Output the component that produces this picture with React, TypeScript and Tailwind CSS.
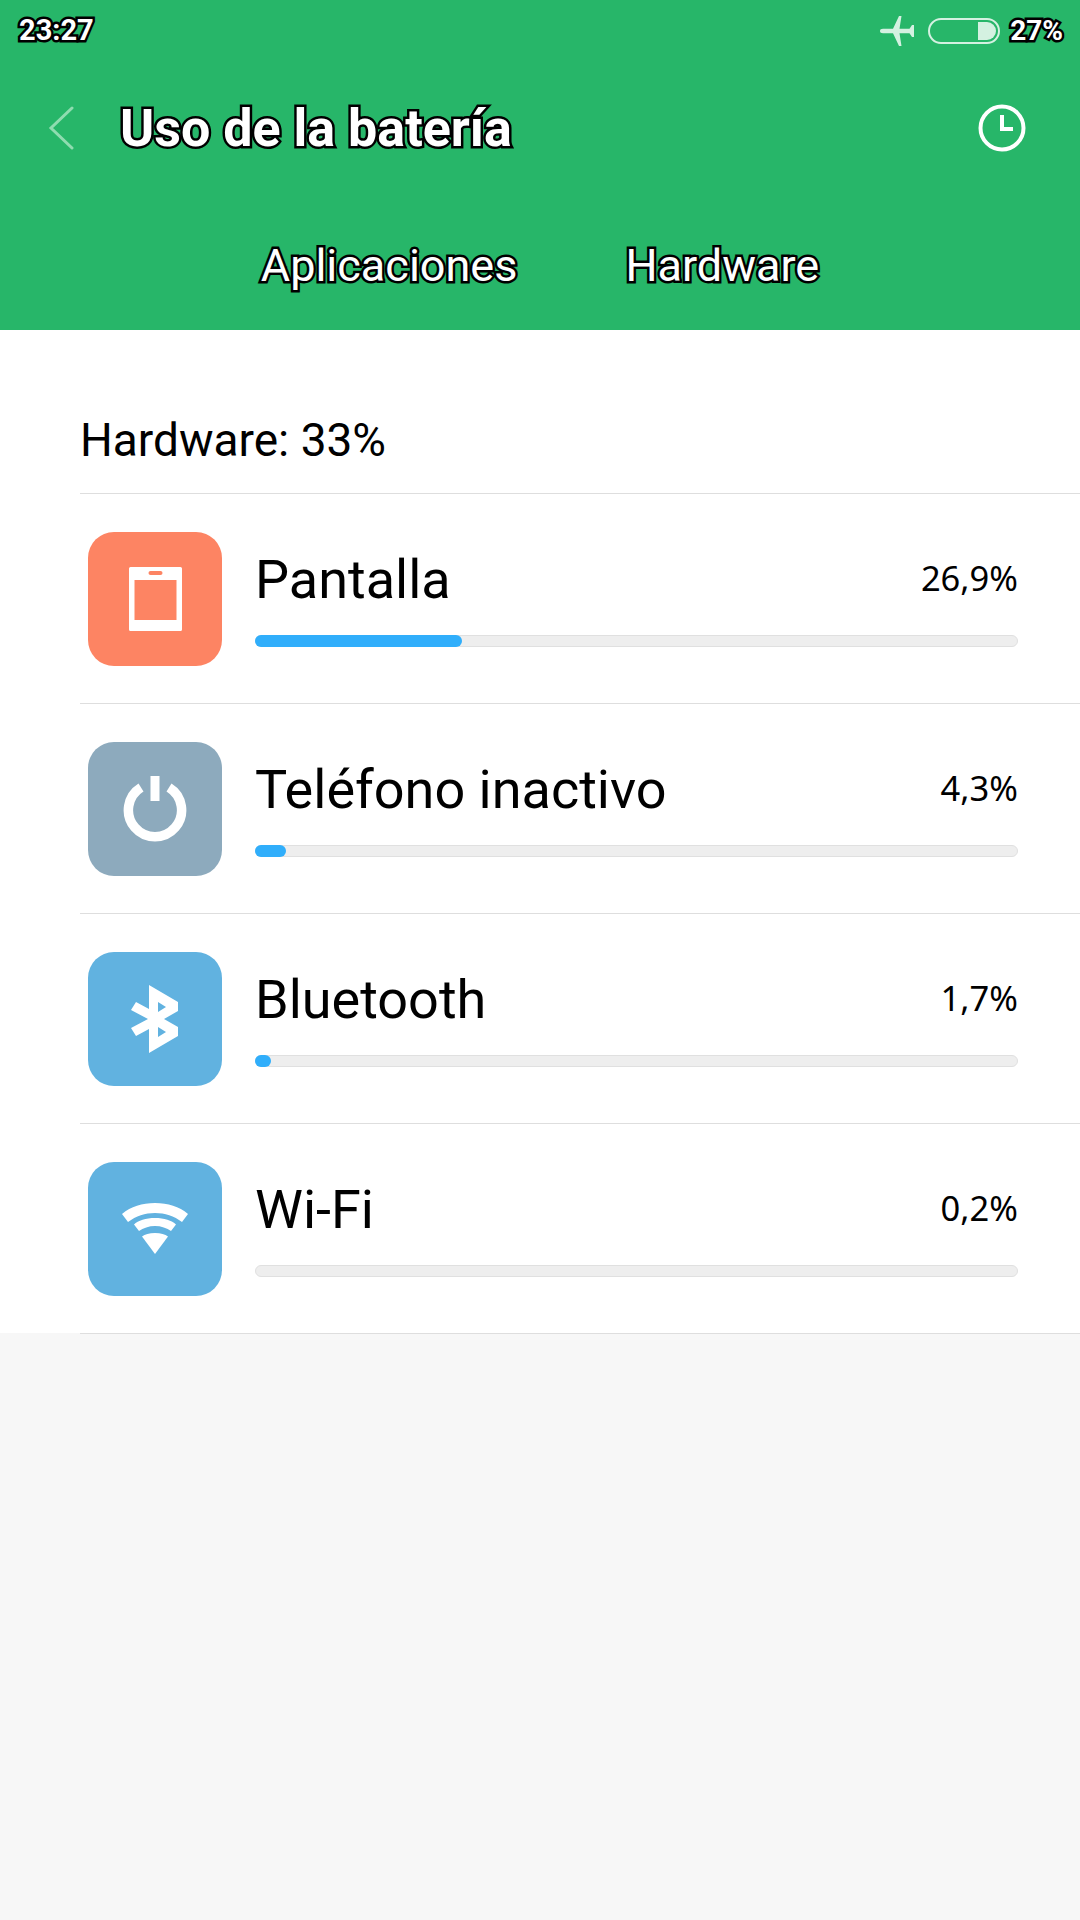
import type { ReactNode } from "react";

const outlined = "[-webkit-text-stroke:5px_#000] [paint-order:stroke_fill] text-white";

const filas = [
  {
    name: "Pantalla",
    pct: "26,9%",
    fill: 207,
    color: "bg-[#fd8463]",
    icon: (
      <svg width="53" height="64" viewBox="0 0 53 64">
        <path fillRule="evenodd" fill="#fff" d="M1.500 0h50a1.500 1.500 0 0 1 1.500 1.500v61a1.500 1.500 0 0 1-1.500 1.500h-50A1.500 1.500 0 0 1 0 62.500v-61A1.500 1.500 0 0 1 1.500 0zM5.500 13v40h42V13z" />
        <rect x="19.500" y="4" width="14" height="4" rx="2" fill="#fd8463" />
      </svg>
    ),
  },
  {
    name: "Teléfono inactivo",
    pct: "4,3%",
    fill: 31,
    color: "bg-[#8daabd]",
    icon: (
      <svg width="64" height="66" viewBox="0 0 64 66">
        <path d="M18 11.500a26.600 26.600 0 1 0 28 0" fill="none" stroke="#fff" strokeWidth="9.500" />
        <rect x="27.500" y="0" width="9" height="25" fill="#fff" />
      </svg>
    ),
  },
  {
    name: "Bluetooth",
    pct: "1,7%",
    fill: 16,
    color: "bg-[#61b2e0]",
    icon: (
      <svg width="50" height="68" viewBox="0 0 50 68">
        <path fill="#fff" fillRule="evenodd" d="M19 0l29 17v9l-14 8 14 8v9L19 68V44L6 51 1 43l17-9L1 25l5-8 13 7zM28 17v10l8-5zM28 42v10l8-5z" />
      </svg>
    ),
  },
  {
    name: "Wi-Fi",
    pct: "0,2%",
    fill: 0,
    color: "bg-[#61b2e0]",
    icon: (
      <svg width="66" height="52" viewBox="0 0 66 52">
        <path fill="#fff" d="M33 0c13 0 24 3.500 33 11l-6 8C52 13 43 10 33 10S14 13 6 19l-6-8C9 3.500 20 0 33 0z" />
        <path fill="#fff" d="M33 15c9 0 17 2.500 21 6.500l-5 6.500c-4-3-10-5-16-5s-12 2-16 5l-5-6.500C16 17.500 24 15 33 15z" />
        <path fill="#fff" d="M33 30c6 0 10 1.500 13 3.500L33 51 20 33.500C23 31.500 27 30 33 30z" />
      </svg>
    ),
  },
];

function Fila({ name, pct, fill, color, icon }: { name: string; pct: string; fill: number; color: string; icon: ReactNode }) {
  return (
    <div className="h-[210px] flex items-center border-b border-[#dedede] pl-[8px]">
      <div className={`w-[134px] h-[134px] rounded-[26px] flex items-center justify-center ${color}`}>{icon}</div>
      <div className="ml-[33px] mb-[2px] w-[763px]">
        <div className="flex items-center justify-between h-[62px]">
          <span className="text-[54px] text-black leading-none">{name}</span>
          <span className="text-[34.500px] text-black leading-none font-['Noto_Sans',sans-serif] -mt-[2px]">{pct}</span>
        </div>
        <div className="mt-[24px] h-[12px] rounded-full bg-[#eeeeee] border border-[#e0e0e0] relative">
          {fill > 0 && <div className="absolute -left-px -top-px h-[12px] rounded-full bg-[#30aefb]" style={{ width: fill }} />}
        </div>
      </div>
    </div>
  );
}

export default function App() {
  return (
    <div className="w-[1080px] h-[1920px] bg-[#f7f7f7] font-['Roboto',sans-serif] overflow-hidden">
      {/* header */}
      <div className="h-[330px] bg-[#27b669]">
        <div className="flex items-center h-[60px] pt-[1px] pl-[19px] pr-[17px]">
          <span className={`text-[29px] font-bold leading-none ${outlined}`}>23:27</span>
          <svg className="ml-auto" width="34" height="30" viewBox="0 0 34 30">
            <path fill="#d4f1e1" d="M0 15c0-1.500 1-2.200 3-2.200h10L19 0h2.500l-2 12.800h10L32 9h2v12h-2l-2.500-3.800h-10l2 12.800H19l-6-12.800H3c-2 0-3-.7-3-2.200z" />
          </svg>
          <div className="ml-[14px] w-[72px] h-[26px] rounded-full border-2 border-[#d4f1e1] p-[2px] flex justify-end">
            <div className="w-[18px] h-full rounded-r-full bg-[#d4f1e1]" />
          </div>
          <span className={`ml-[10px] text-[28px] font-bold leading-none ${outlined}`}>27%</span>
        </div>
        <div className="flex items-center h-[70px] mt-[33px] pl-[48px] pr-[54px]">
          <svg width="26" height="44" viewBox="0 0 26 44">
            <path d="M24 2L3 22l21 20" fill="none" stroke="#8fdcb0" strokeWidth="3" strokeLinecap="round" />
          </svg>
          <span className={`ml-[46px] mt-[2px] text-[52px] font-bold leading-none ${outlined}`}>Uso de la batería</span>
          <svg className="ml-auto -mt-[1px]" width="48" height="48" viewBox="0 0 48 48">
            <circle cx="24" cy="24" r="21.500" fill="none" stroke="#fff" strokeWidth="4" />
            <path d="M24 11v14h11" fill="none" stroke="#fff" strokeWidth="4" />
          </svg>
        </div>
        <div className="flex justify-center gap-[108px] mt-[80px]">
          <span className={`text-[45px] leading-none ${outlined} [-webkit-text-stroke:4px_#000]`}>Aplicaciones</span>
          <span className={`text-[45px] leading-none ${outlined} [-webkit-text-stroke:4px_#000]`}>Hardware</span>
        </div>
      </div>

      {/* lista */}
      <div className="bg-white h-[1003px] pl-[80px]">
        <div className="h-[164px] flex items-end border-b border-[#dedede] pb-[30px] ">
          <span className="text-[46px] leading-none text-black">Hardware: 33%</span>
        </div>
        {filas.map((f) => (
          <Fila key={f.name} {...f} />
        ))}
      </div>
    </div>
  );
}
